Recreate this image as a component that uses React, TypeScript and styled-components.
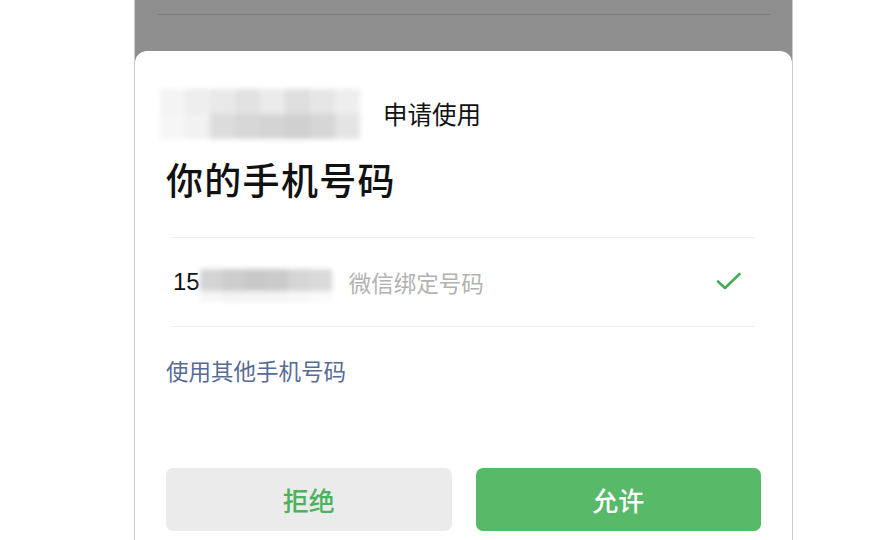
import styled, { createGlobalStyle } from "styled-components";

const GlobalStyle = createGlobalStyle`
  body {
    margin: 0;
    background: #ffffff;
    font-family: "Noto Sans CJK SC", "Noto Sans", sans-serif;
  }
`;

const Frame = styled.div`
  margin-left: 134px;
  width: 659px;
  height: 540px;
  box-sizing: border-box;
  border-left: 1px solid #cdcdcd;
  border-right: 1px solid #cdcdcd;
  background: #8f8f8f;
  display: flex;
  flex-direction: column;
  overflow: hidden;
`;

const Backdrop = styled.div`
  height: 51px;
  box-sizing: border-box;
  padding: 14px 22px 0 23px;
  flex-shrink: 0;
`;

const BackdropLine = styled.div`
  height: 1px;
  background: #7c7c7c;
`;

const Sheet = styled.div`
  flex: 1;
  background: #ffffff;
  border-radius: 12px 12px 0 0;
  padding: 0 31px;
  display: flex;
  flex-direction: column;
`;

const AppRow = styled.div`
  margin-top: 38px;
  height: 50px;
  display: flex;
  align-items: center;
  gap: 23px;
`;

const Mosaic = styled.div<{ $cols: number; $cell: number }>`
  display: grid;
  grid-template-columns: repeat(${(p) => p.$cols}, ${(p) => p.$cell}px);
  filter: blur(2.5px);
`;

const Cell = styled.div<{ $shade: string; $h: number }>`
  height: ${(p) => p.$h}px;
  background: ${(p) => p.$shade};
`;

const NameMosaic = styled(Mosaic)`
  margin-left: -6px;
`;

const AskText = styled.span`
  font-size: 24.5px;
  color: #111111;
  line-height: 30px;
`;

const Title = styled.h1`
  margin: 18px 0 0;
  font-size: 37px;
  line-height: 44px;
  font-weight: 500;
  color: #111111;
  letter-spacing: 1.3px;
`;

const Divider = styled.div<{ $top: number }>`
  margin: ${(p) => p.$top}px 6px 0;
  height: 1px;
  background: #ededed;
`;

const PhoneRow = styled.div`
  height: 88px;
  margin: 0 6px;
  padding: 0 14px 0 1px;
  display: flex;
  align-items: center;
`;

const PhonePrefix = styled.span`
  font-family: "Liberation Sans", Arial, sans-serif;
  font-size: 24px;
  color: #111111;
`;

const NumberMosaic = styled(Mosaic)`
  margin-left: 0;
  margin-top: 6px;
`;

const PhoneNote = styled.span`
  margin-left: 17px;
  font-size: 22.5px;
  color: #b2b2b2;
  flex: 1;
`;

const LinkText = styled.a`
  margin-top: 28px;
  font-size: 22.5px;
  line-height: 30px;
  color: #576b95;
  text-decoration: none;
`;

const Actions = styled.div`
  margin-top: 83px;
  display: flex;
  gap: 24px;
`;

const ActionButton = styled.button<{ $primary?: boolean }>`
  flex: 1;
  height: 63px;
  border: none;
  border-radius: 7px;
  font-family: inherit;
  font-size: 26px;
  font-weight: 500;
  background: ${(p) => (p.$primary ? "#58b969" : "#ebebeb")};
  color: ${(p) => (p.$primary ? "#ffffff" : "#4cb25d")};
`;

const nameShades = [
  ["#f4f4f4", "#eeeeee", "#e9e9e9", "#e2e2e2", "#ebebeb", "#dedede", "#e6e6e6", "#eeeeee"],
  ["#f6f6f6", "#f2f2f2", "#dcdcdc", "#d7d7d7", "#d4d4d4", "#d0d0d0", "#d6d6d6", "#e4e4e4"],
];

const numberShades = [
  ["#d4d4d4", "#cdcdcd", "#c9c9c9", "#cbcbcb", "#d6d6d6", "#dadada"],
  ["#f6f6f6", "#f3f3f3", "#f4f4f4", "#f5f5f5", "#f7f7f7", "#fafafa"],
];

const CheckIcon = () => (
  <svg width="26" height="20" viewBox="0 0 26 20" fill="none">
    <path
      d="M3 9.5 L10 16 L24.5 2"
      stroke="#45ad55"
      strokeWidth="2.6"
      strokeLinecap="round"
      strokeLinejoin="round"
    />
  </svg>
);

const App = () => {
  return (
    <>
      <GlobalStyle />
      <Frame>
        <Backdrop>
          <BackdropLine />
        </Backdrop>
        <Sheet>
          <AppRow>
            <NameMosaic $cols={8} $cell={25}>
              {nameShades.flat().map((shade, i) => (
                <Cell key={i} $shade={shade} $h={25} />
              ))}
            </NameMosaic>
            <AskText>申请使用</AskText>
          </AppRow>
          <Title>你的手机号码</Title>
          <Divider $top={36} />
          <PhoneRow>
            <PhonePrefix>15</PhonePrefix>
            <NumberMosaic $cols={6} $cell={22}>
              {numberShades.flat().map((shade, i) => (
                <Cell key={i} $shade={shade} $h={i < 6 ? 22 : 11} />
              ))}
            </NumberMosaic>
            <PhoneNote>微信绑定号码</PhoneNote>
            <CheckIcon />
          </PhoneRow>
          <Divider $top={0} />
          <LinkText>使用其他手机号码</LinkText>
          <Actions>
            <ActionButton>拒绝</ActionButton>
            <ActionButton $primary>允许</ActionButton>
          </Actions>
        </Sheet>
      </Frame>
    </>
  );
};

export default App;
